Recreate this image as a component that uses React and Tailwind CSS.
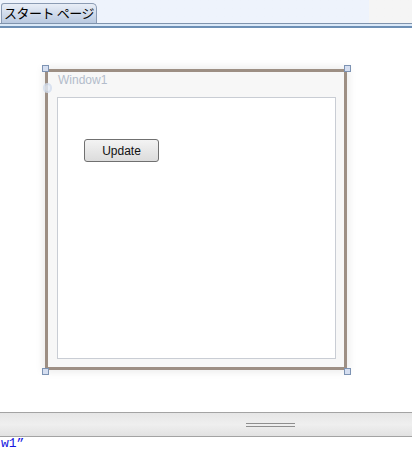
import React from 'react';

function Handle({ className }) {
  return <div className={`absolute w-[7px] h-[7px] border border-[#7d93b3] bg-[#d5def0] ${className}`} />;
}

export default function App() {
  return (
    <div className="w-[412px] h-[450px] flex flex-col bg-white overflow-hidden" style={{ fontFamily: '"Noto Sans", "Noto Sans CJK JP", sans-serif' }}>
      {/* tab strip */}
      <div className="h-[23px] flex items-end bg-gradient-to-r from-[#eef3fc] from-[369px] to-[#f5f5f5] to-[369px]">
        <div className="ml-[1px] h-[20px] w-[96px] flex items-center justify-center rounded-tr-[5px] rounded-tl-[3px] border border-b-0 border-[#8b9bb3] bg-gradient-to-b from-[#e9eef7] to-[#b9c9e0] text-[13px] leading-none text-black tracking-[-0.5px]">
          スタート ページ
        </div>
      </div>
      <div className="h-[1px] bg-[#7f93ad]" />
      <div className="h-[2px] bg-[#dbe9f8]" />
      <div className="h-[2px] bg-[#6d8fb5]" />

      {/* design canvas */}
      <div className="h-[384px] pl-[45px] pt-[41px] bg-white">
        <div className="relative w-[302px] h-[301px] border-[3px] border-[#9d8f84] bg-[#f7f7f7] shadow-[0_0_8px_2px_rgba(0,0,0,0.08)]">
          <Handle className="-left-[6px] -top-[7px]" />
          <Handle className="-right-[7px] -top-[7px]" />
          <Handle className="-left-[6px] -bottom-[8px]" />
          <Handle className="-right-[7px] -bottom-[8px]" />
          <div className="absolute -left-[5px] top-[11px] w-[9px] h-[10px] rounded-full border-2 border-[#d3deef] bg-[#e6edf7] opacity-80" />
          <div className="h-[25px] pl-[10px] pt-[1px] text-[12px] leading-[15px] text-[#b3bccb]" style={{ fontFamily: '"Liberation Sans", sans-serif' }}>
            Window1
          </div>
          <div className="ml-[9px] w-[279px] h-[262px] border border-[#c9cdd4] bg-white pl-[26px] pt-[41px]">
            <button className="block w-[75px] h-[23px] rounded-[3px] border border-[#707070] bg-gradient-to-b from-[#f3f3f3] to-[#dcdcdc] text-[12px] text-[#111]" style={{ fontFamily: '"Liberation Sans", sans-serif' }}>
              Update
            </button>
          </div>
        </div>
      </div>

      {/* bottom splitter bar */}
      <div className="h-[1px] bg-[#a3a3a3]" />
      <div className="h-[23px] flex items-center bg-gradient-to-b from-[#e6e6e6] via-[#efefef] to-[#e2e2e2]">
        <div className="ml-[246px] w-[49px] flex flex-col gap-[2px]">
          <div className="h-[1px] bg-[#8f8f8f]" />
          <div className="h-[1px] bg-[#8f8f8f]" />
        </div>
      </div>
      <div className="h-[1px] bg-[#a3a3a3]" />
      <div className="pl-[1px] text-[13px] leading-[13px] text-[#1515e0]" style={{ fontFamily: '"Liberation Mono", monospace' }}>
        w1”
      </div>
    </div>
  );
}
